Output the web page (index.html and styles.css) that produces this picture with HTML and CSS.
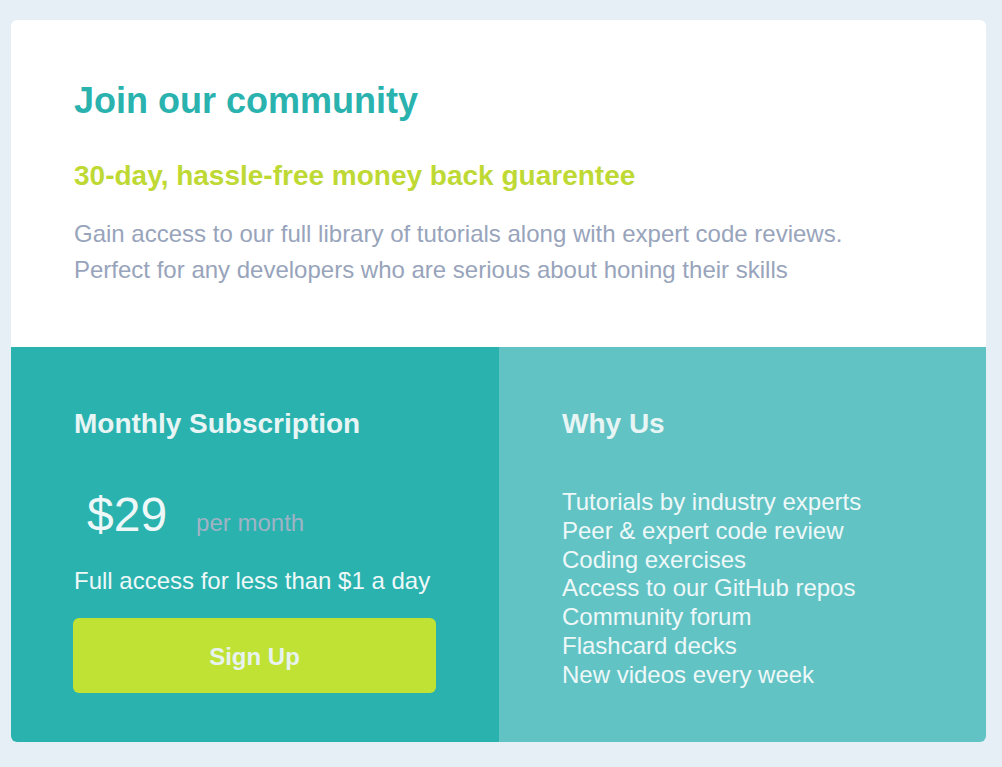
FILE: index.html
```html
<!DOCTYPE html>
<html lang="en">
<head>
<meta charset="utf-8">
<title>Join our community</title>
<link rel="stylesheet" href="styles.css">
</head>
<body>
<main class="card">
  <section class="intro">
    <h1 class="title">Join our community</h1>
    <h2 class="subtitle">30-day, hassle-free money back guarentee</h2>
    <p class="desc">Gain access to our full library of tutorials along with expert code reviews.<br>Perfect for any developers who are serious about honing their skills</p>
  </section>
  <div class="bottom">
    <section class="sub">
      <h3 class="col-title">Monthly Subscription</h3>
      <div class="price-row">
        <span class="price">$29</span>
        <span class="per">per month</span>
      </div>
      <p class="full">Full access for less than $1 a day</p>
      <button class="btn">Sign Up</button>
    </section>
    <section class="why">
      <h3 class="col-title">Why Us</h3>
      <ul class="list">
        <li>Tutorials by industry experts</li>
        <li>Peer &amp; expert code review</li>
        <li>Coding exercises</li>
        <li>Access to our GitHub repos</li>
        <li>Community forum</li>
        <li>Flashcard decks</li>
        <li>New videos every week</li>
      </ul>
    </section>
  </div>
</main>
</body>
</html>
```
FILE: styles.css
```css
* { box-sizing: border-box; }
html, body { margin: 0; padding: 0; }
body {
  background: #e6eff6;
  font-family: "Liberation Sans", Arial, sans-serif;
  padding: 20px 16px 25px 11px;
}
.card {
  background: #fff;
  border-radius: 6px;
  overflow: hidden;
}
.intro {
  padding: 60px 63px 59px;
}
.title {
  margin: 0;
  font-size: 36px;
  line-height: 42px;
  font-weight: 700;
  color: #2ab2af;
}
.subtitle {
  margin: 38px 0 0;
  font-size: 28px;
  line-height: 32px;
  font-weight: 700;
  color: #bfd934;
}
.desc {
  margin: 24px 0 0;
  font-size: 24px;
  line-height: 36px;
  color: #98a4bb;
}
.bottom {
  display: grid;
  grid-template-columns: 488px 1fr;
}
.sub {
  background: #2ab2af;
  padding: 60px 63px 49px 62px;
}
.sub .col-title {
  margin-left: 1px;
}
.why {
  background: #62c3c4;
  padding: 60px 63px 49px;
}
.col-title {
  margin: 0;
  font-size: 28px;
  line-height: 34px;
  font-weight: 700;
  color: #e8f5f5;
}
.price-row {
  display: flex;
  align-items: baseline;
  margin-top: 44px;
  padding-left: 14px;
}
.price {
  font-size: 48px;
  line-height: 60px;
  color: #eef8f8;
}
.per {
  margin-left: 29px;
  font-size: 24px;
  color: #9fb3c5;
}
.full {
  margin: 21px 0 0 1px;
  font-size: 24px;
  line-height: 30px;
  color: #eef8f8;
}
.btn {
  display: block;
  width: 363px;
  height: 75px;
  margin-top: 22px;
  padding: 3px 0 0;
  border: none;
  border-radius: 6px;
  background: #bfe234;
  color: #e8f2ee;
  font-family: inherit;
  font-size: 24px;
  font-weight: 700;
}
.list {
  list-style: none;
  margin: 47px 0 0;
  padding: 0;
  font-size: 24px;
  line-height: 28.8px;
  color: #eef8f8;
}
```
